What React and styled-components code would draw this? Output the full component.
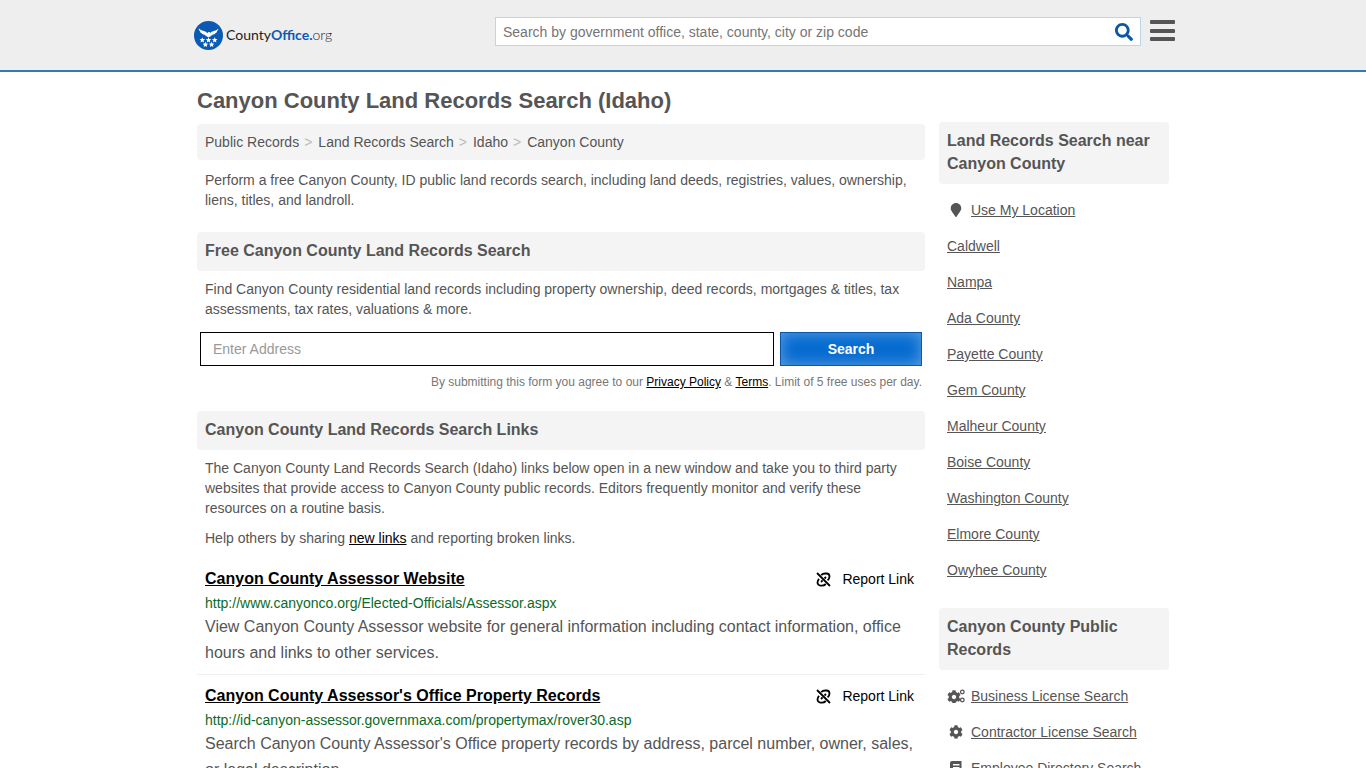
import React from 'react'
import styled, { createGlobalStyle } from 'styled-components'
import { FaCog, FaMapMarker, FaSearch } from 'react-icons/fa'

const CSS_MOBILE = 'max-width: 760px'

const GlobalStyle = createGlobalStyle`
    * {
        box-sizing: border-box;
    }

    body {
        margin: 0;
        background: #fff;
        color: #555;
        font-family: "Liberation Sans", Arial, sans-serif;
        font-size: 14px;
        line-height: 20px;
    }
`

const Page = styled.div`
    height: 100vh;
    overflow: hidden;
`

const Header = styled.header`
    background: #eee;
    border-bottom: 2px solid #337ab7;
`

const HeaderInner = styled.div`
    display: flex;
    align-items: flex-start;
    max-width: 984px;
    height: 70px;
    margin: 0 auto;
    padding-left: 3px;
`

const Logo = styled.a`
    display: flex;
    align-items: center;
    gap: 3px;
    flex: 0 0 auto;
    margin-top: 20px;
    color: #222;
    font-family: Lato, sans-serif;
    font-size: 14px;
    line-height: 30px;
    text-decoration: none;

    b {
        color: #0a5ab4;
    }
`

const LogoSuffix = styled.span`
    font-weight: 300;
`

const SearchForm = styled.form`
    display: flex;
    flex: 0 1 646px;
    height: 29px;
    margin: 17px 9px 0 auto;
    background: #fff;
    border: 1px solid #bcd5e8;
`

const SearchInput = styled.input`
    flex: 1;
    min-width: 0;
    padding: 0 7px;
    border: 0;
    background: none;
    font: inherit;

    &::placeholder {
        color: #757575;
        opacity: 1;
    }
`

const SearchIconButton = styled.button`
    display: flex;
    align-items: center;
    padding: 0 7px;
    border: 0;
    background: none;
    color: #0a57a8;
    font-size: 18px;
`

const MenuButton = styled.button`
    display: flex;
    flex-direction: column;
    justify-content: space-between;
    width: 25px;
    height: 21px;
    margin: 20px 0 0;
    padding: 0;
    border: 0;
    background: none;
`

const MenuBar = styled.span`
    width: 25px;
    height: 4px;
    border-radius: 1px;
    background: #555;
`

const Columns = styled.div`
    display: flex;
    align-items: flex-start;
    gap: 14px;
    max-width: 972px;
    margin: 0 auto;

    @media (${CSS_MOBILE}) {
        flex-direction: column;
    }
`

const Main = styled.main`
    flex: 1;
    min-width: 0;
`

const Aside = styled.aside`
    flex: 0 0 230px;
    padding-top: 50px;
`

const Title = styled.h1`
    margin: 15px 0 9px;
    font-size: 22px;
    line-height: 28px;
`

const Breadcrumb = styled.nav`
    padding: 8px;
    border-radius: 4px;
    background: #f4f4f4;
`

const Crumb = styled.a`
    color: #555;
    text-decoration: none;
`

const Divider = styled.span`
    padding: 0 6px 0 5px;
    color: #bbb;
`

const Text = styled.p`
    margin: 10px 8px;
`

const BoxHead = styled.h2`
    margin: 0;
    padding: 7px 8px 9px;
    border-radius: 4px;
    background: #f4f4f4;
    font-size: 16px;
    line-height: 23px;
`

const SectionHead = styled(BoxHead)`
    margin-top: 22px;

    & + p {
        margin-top: 8px;
    }
`

const AddressForm = styled.form`
    display: flex;
    gap: 6px;
    margin: 13px 3px 9px;
`

const AddressInput = styled.input`
    flex: 1;
    min-width: 0;
    height: 34px;
    padding: 0 12px;
    border: 1px solid #000;
    background: #fff;
    font: inherit;

    &::placeholder {
        color: #999;
        opacity: 1;
    }
`

const SubmitButton = styled.button`
    flex: 0 0 142px;
    height: 34px;
    border: 1px solid #0e57a6;
    background: #056bd0;
    box-shadow: inset 0 0 15px #62a1e2;
    color: #fff;
    font: inherit;
    font-weight: bold;
`

const Note = styled.p`
    margin: 0 3px;
    color: #777;
    font-size: 12px;
    line-height: 14px;
    text-align: right;
`

const DarkLink = styled.a`
    color: #000;
`

const Result = styled.article`
    padding: 9px 8px 8px;
    border-bottom: 1px solid #eee;
`

const ResultTop = styled.div`
    display: flex;
    justify-content: space-between;
    align-items: center;
    padding-right: 3px;
`

const ResultTitle = styled.h3`
    margin: 0;
    font-size: 16px;
    line-height: 24px;
`

const ReportLink = styled.a`
    display: flex;
    align-items: center;
    gap: 11px;
    color: #000;
    text-decoration: none;
`

const ResultUrl = styled.div`
    margin-top: 1px;
    color: #0a6b27;
    line-height: 22px;
`

const ResultText = styled.p`
    margin: 0;
    font-size: 16px;
    line-height: 26px;
`

const SideList = styled.ul`
    margin: 8px 0 20px;
    padding: 0 8px;
    list-style: none;
`

const SideItem = styled.li`
    display: flex;
    align-items: center;
    height: 36px;
`

const SideIcon = styled.span`
    display: flex;
    justify-content: center;
    flex: 0 0 18px;
    margin-right: 6px;
`

const SideLink = styled.a`
    color: #555;
`

const UnlinkIcon = () => (
    <svg width="15" height="15" viewBox="0 0 15 15" fill="none" stroke="#000" strokeWidth="1.8" aria-hidden="true">
        <path d="M1 1l13 13" />
        <path d="M5.200 3.200c1.200-1.300 2.500-1.700 4-1.700h1.300a3 3 0 0 1 3 3c0 1.700-.6 2.700-1.900 3.900" />
        <path d="M9.800 12c-1.200 1.200-2.400 1.600-3.800 1.600H4.500a3 3 0 0 1-3-3c0-1.500.5-2.600 1.600-3.700" />
        <path d="M5 10l1.600-1.600M8.500 6.500L10 5" />
    </svg>
)

const CogsIcon = () => (
    <svg width="18" height="14" viewBox="0 0 18 14" aria-hidden="true">
        <FaCog x="0" y="1" width="12" height="12" />
        <g fill="none" stroke="#555" strokeWidth="1.3">
            <circle cx="15.300" cy="3" r="1.800" />
            <circle cx="15.300" cy="11" r="1.800" />
        </g>
    </svg>
)

const BookIcon = () => (
    <svg width="14" height="14" viewBox="0 0 14 14" aria-hidden="true">
        <path fill="#555" fillRule="evenodd" d="M3 0h9.500v13H3a2 2 0 0 1-2-2V2a2 2 0 0 1 2-2zM4 3v1.400h6.500V3zM4 6v1.400h6.500V6z" />
    </svg>
)

const STAR = 'M0-2.800l.8 1.850 2 .2-1.500 1.350.45 1.950L0 1.550l-1.750 1 .45-1.950-1.500-1.350 2-.2z'

const LogoMark = () => (
    <svg width="29" height="29" viewBox="0 0 29 29" fill="#fff" aria-hidden="true">
        <circle cx="14.500" cy="14.500" r="14.500" fill="#0a5ab4" />
        <path d="M4.700 7.200c1.700 2 4 2.400 6 3 1.500.5 2.300 1.100 2.700 2.300l.5-1.200 1.400-.3.900.6-.5.300.3.500c.5-1 1.200-1.500 2.400-1.900 2-.6 4.300-1 6-3-.1 1.500-.8 2.400-1.900 2.900h.7c-.5 1.200-1.400 1.700-2.400 1.800l.5.200c-.7.900-1.600 1.200-2.500 1.100-.8 1-1.700 1.400-2.700 1.500l.5 1-1.200-.3-.9.900-.9-.9-1.200.3.5-1c-1-.1-1.900-.5-2.700-1.500-.9.100-1.800-.2-2.500-1.100l.5-.2c-1-.1-1.900-.6-2.400-1.800h.7c-1.100-.5-1.700-1.500-1.800-3.200z" />
        {[[8.3, 19], [14.5, 19], [20.7, 19], [11.4, 23.5], [17.6, 23.5]].map(([x, y]) => (
            <path key={`${x}-${y}`} d={STAR} transform={`translate(${x} ${y})`} />
        ))}
    </svg>
)

const crumbs = ['Public Records', 'Land Records Search', 'Idaho', 'Canyon County']

const results = [
    {
        title: 'Canyon County Assessor Website',
        url: 'http://www.canyonco.org/Elected-Officials/Assessor.aspx',
        text: 'View Canyon County Assessor website for general information including contact information, office hours and links to other services.'
    },
    {
        title: "Canyon County Assessor's Office Property Records",
        url: 'http://id-canyon-assessor.governmaxa.com/propertymax/rover30.asp',
        text: "Search Canyon County Assessor's Office property records by address, parcel number, owner, sales, or legal description."
    }
]

const nearby = [
    { label: 'Use My Location', icon: <FaMapMarker /> },
    { label: 'Caldwell' },
    { label: 'Nampa' },
    { label: 'Ada County' },
    { label: 'Payette County' },
    { label: 'Gem County' },
    { label: 'Malheur County' },
    { label: 'Boise County' },
    { label: 'Washington County' },
    { label: 'Elmore County' },
    { label: 'Owyhee County' }
]

const records = [
    { label: 'Business License Search', icon: <CogsIcon /> },
    { label: 'Contractor License Search', icon: <FaCog /> },
    { label: 'Employee Directory Search', icon: <BookIcon /> }
]

const SideMenu = ({ title, items }) => (
    <section>
        <BoxHead>{title}</BoxHead>
        <SideList>
            {items.map(item => (
                <SideItem key={item.label}>
                    {item.icon && <SideIcon>{item.icon}</SideIcon>}
                    <SideLink href="#">{item.label}</SideLink>
                </SideItem>
            ))}
        </SideList>
    </section>
)

export default function App() {
    return (
        <Page>
            <GlobalStyle />
            <Header>
                <HeaderInner>
                    <Logo href="#">
                        <LogoMark />
                        <span>County<b>Office.</b><LogoSuffix>org</LogoSuffix></span>
                    </Logo>
                    <SearchForm role="search">
                        <SearchInput
                            type="text"
                            aria-label="Search"
                            placeholder="Search by government office, state, county, city or zip code"
                        />
                        <SearchIconButton type="button" aria-label="Submit search">
                            <FaSearch />
                        </SearchIconButton>
                    </SearchForm>
                    <MenuButton type="button" aria-label="Menu">
                        <MenuBar />
                        <MenuBar />
                        <MenuBar />
                    </MenuButton>
                </HeaderInner>
            </Header>

            <Columns>
                <Main>
                    <Title>Canyon County Land Records Search (Idaho)</Title>
                    <Breadcrumb>
                        {crumbs.map((crumb, i) => (
                            <React.Fragment key={crumb}>
                                {i > 0 && <Divider>&gt;</Divider>}
                                <Crumb href="#">{crumb}</Crumb>
                            </React.Fragment>
                        ))}
                    </Breadcrumb>
                    <Text>
                        Perform a free Canyon County, ID public land records search, including land deeds,
                        registries, values, ownership, liens, titles, and landroll.
                    </Text>

                    <SectionHead>Free Canyon County Land Records Search</SectionHead>
                    <Text>
                        Find Canyon County residential land records including property ownership, deed records,
                        mortgages &amp; titles, tax assessments, tax rates, valuations &amp; more.
                    </Text>
                    <AddressForm>
                        <AddressInput type="text" aria-label="Address" placeholder="Enter Address" />
                        <SubmitButton type="button">Search</SubmitButton>
                    </AddressForm>
                    <Note>
                        By submitting this form you agree to our <DarkLink href="#">Privacy Policy</DarkLink> &amp;{' '}
                        <DarkLink href="#">Terms</DarkLink>. Limit of 5 free uses per day.
                    </Note>

                    <SectionHead>Canyon County Land Records Search Links</SectionHead>
                    <Text>
                        The Canyon County Land Records Search (Idaho) links below open in a new window and take you
                        to third party websites that provide access to Canyon County public records. Editors
                        frequently monitor and verify these resources on a routine basis.
                    </Text>
                    <Text>
                        Help others by sharing <DarkLink href="#">new links</DarkLink> and reporting broken links.
                    </Text>
                    {results.map(result => (
                        <Result key={result.url}>
                            <ResultTop>
                                <ResultTitle>
                                    <DarkLink href="#">{result.title}</DarkLink>
                                </ResultTitle>
                                <ReportLink href="#">
                                    <UnlinkIcon />
                                    Report Link
                                </ReportLink>
                            </ResultTop>
                            <ResultUrl>{result.url}</ResultUrl>
                            <ResultText>{result.text}</ResultText>
                        </Result>
                    ))}
                </Main>

                <Aside>
                    <SideMenu title="Land Records Search near Canyon County" items={nearby} />
                    <SideMenu title="Canyon County Public Records" items={records} />
                </Aside>
            </Columns>
        </Page>
    )
}
